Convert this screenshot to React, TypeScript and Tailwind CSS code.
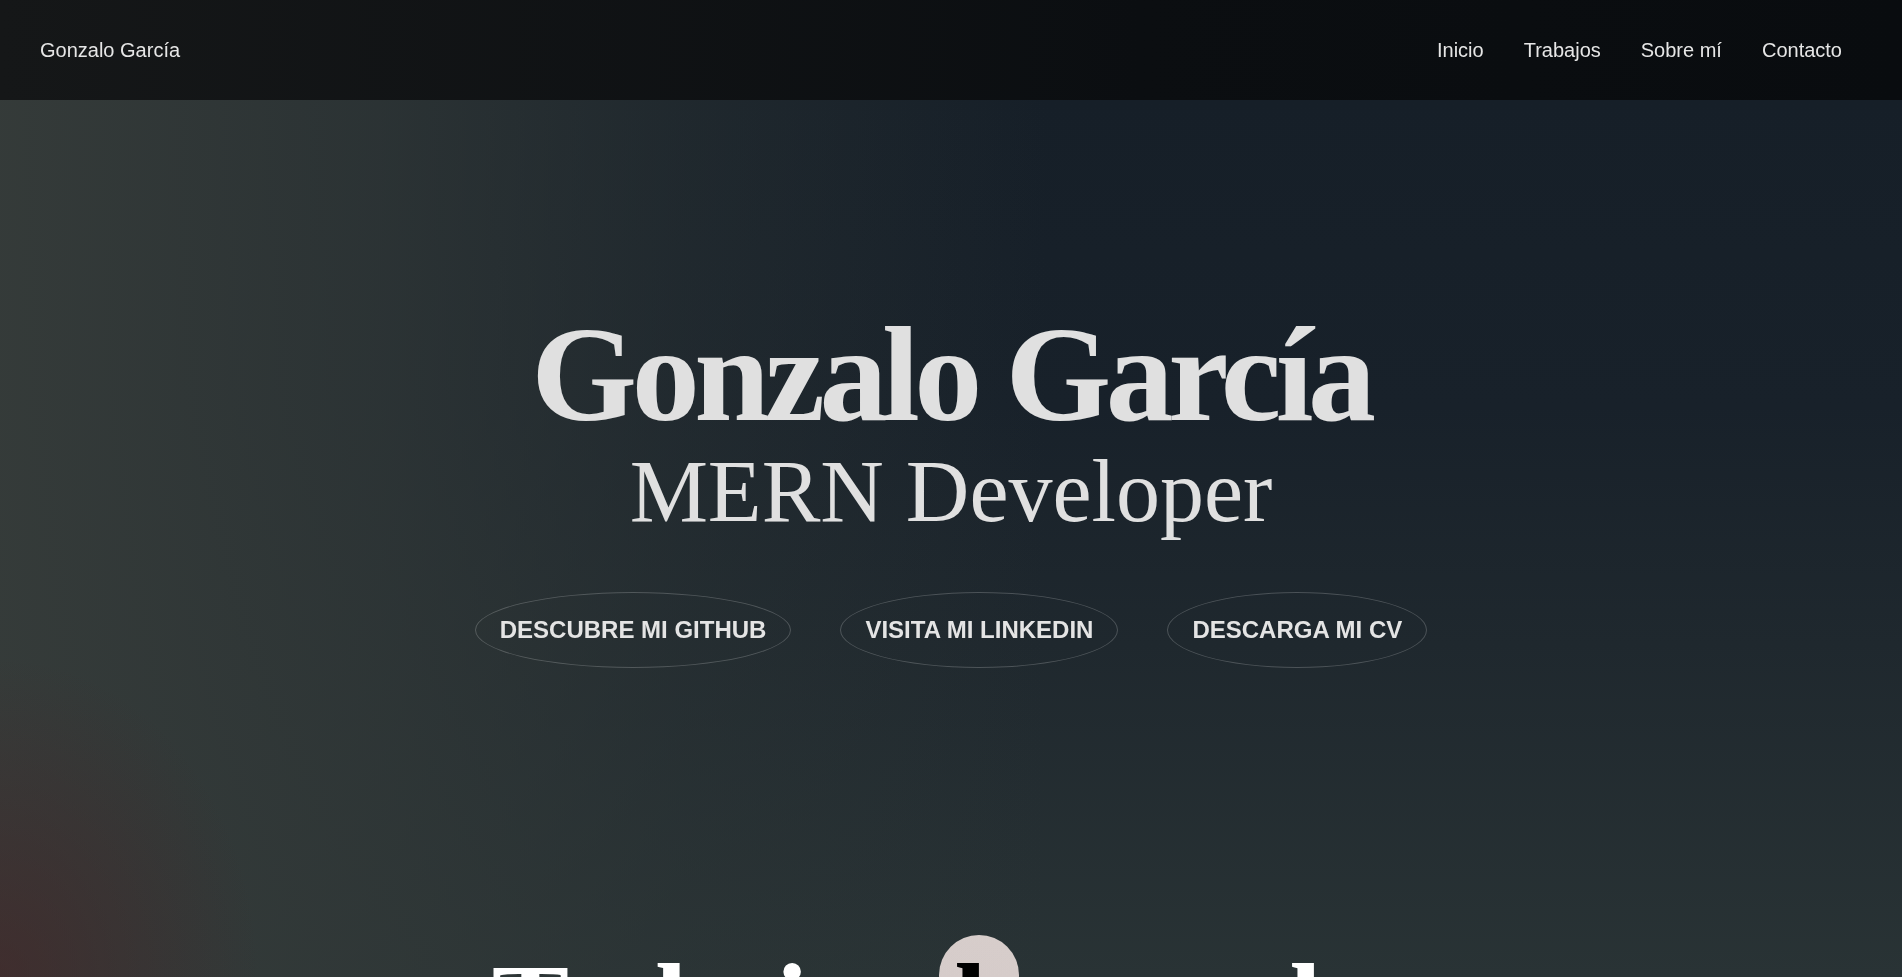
const links = ["Inicio", "Trabajos", "Sobre mí", "Contacto"];

const buttons = ["DESCUBRE MI GITHUB", "VISITA MI LINKEDIN", "DESCARGA MI CV"];

function Navbar() {
  return (
    <header className="h-[100px] px-10 flex items-center justify-between bg-[linear-gradient(90deg,#151718,#0b0e11_60%,#090c0f)] font-['Liberation_Sans',Arial,sans-serif] text-[20px] text-[#e6e6e6]">
      <a href="#">Gonzalo García</a>
      <nav className="flex">
        {links.map((l) => (
          <a key={l} href="#" className="px-5">
            {l}
          </a>
        ))}
      </nav>
    </header>
  );
}

export default function App() {
  return (
    <div className="relative h-screen overflow-hidden bg-[#161f28]">
      <Navbar />

      <main className="relative h-[877px] bg-[linear-gradient(180deg,#161f28_0%,#18212a_35%,#1f282e_62%,#293335_100%)]">
        {/* light wash from the left + warm corner */}
        <div className="absolute inset-0 bg-[linear-gradient(90deg,rgba(54,60,58,0.95)_0%,rgba(50,57,56,0.75)_20%,rgba(46,54,54,0.4)_36%,rgba(40,48,50,0)_55%)]" />
        <div className="absolute inset-0 bg-[radial-gradient(ellipse_260px_320px_at_0%_100%,rgba(72,34,36,0.55),transparent)]" />

        <section className="relative flex flex-col items-center pt-[206px] text-[#e0e0e0] font-['Liberation_Serif','Times_New_Roman',serif]">
          <h1 className="text-[136px] leading-none font-bold tracking-[-0.04em]">
            Gonzalo García
          </h1>
          <h2 className="mt-[6px] text-[88px] leading-none">MERN Developer</h2>

          <div className="mt-[56px] flex gap-[49px] font-['Liberation_Sans',Arial,sans-serif]">
            {buttons.map((b) => (
              <a
                key={b}
                href="#"
                className="px-6 h-[76px] flex items-center rounded-[50%] border border-white/20 text-[24px] font-bold text-[#e4e4e4]"
              >
                {b}
              </a>
            ))}
          </div>
        </section>

        <section className="relative mt-[279px] flex justify-center font-['Liberation_Serif','Times_New_Roman',serif]">
          <h2 className="text-[116px] leading-none font-bold tracking-[-0.04em] text-white">
            Trabajos destacados
          </h2>
        </section>
      </main>

      {/* cursor follower */}
      <div className="absolute left-[939px] top-[935px] w-20 h-20 rounded-full bg-white mix-blend-difference pointer-events-none" />
    </div>
  );
}
